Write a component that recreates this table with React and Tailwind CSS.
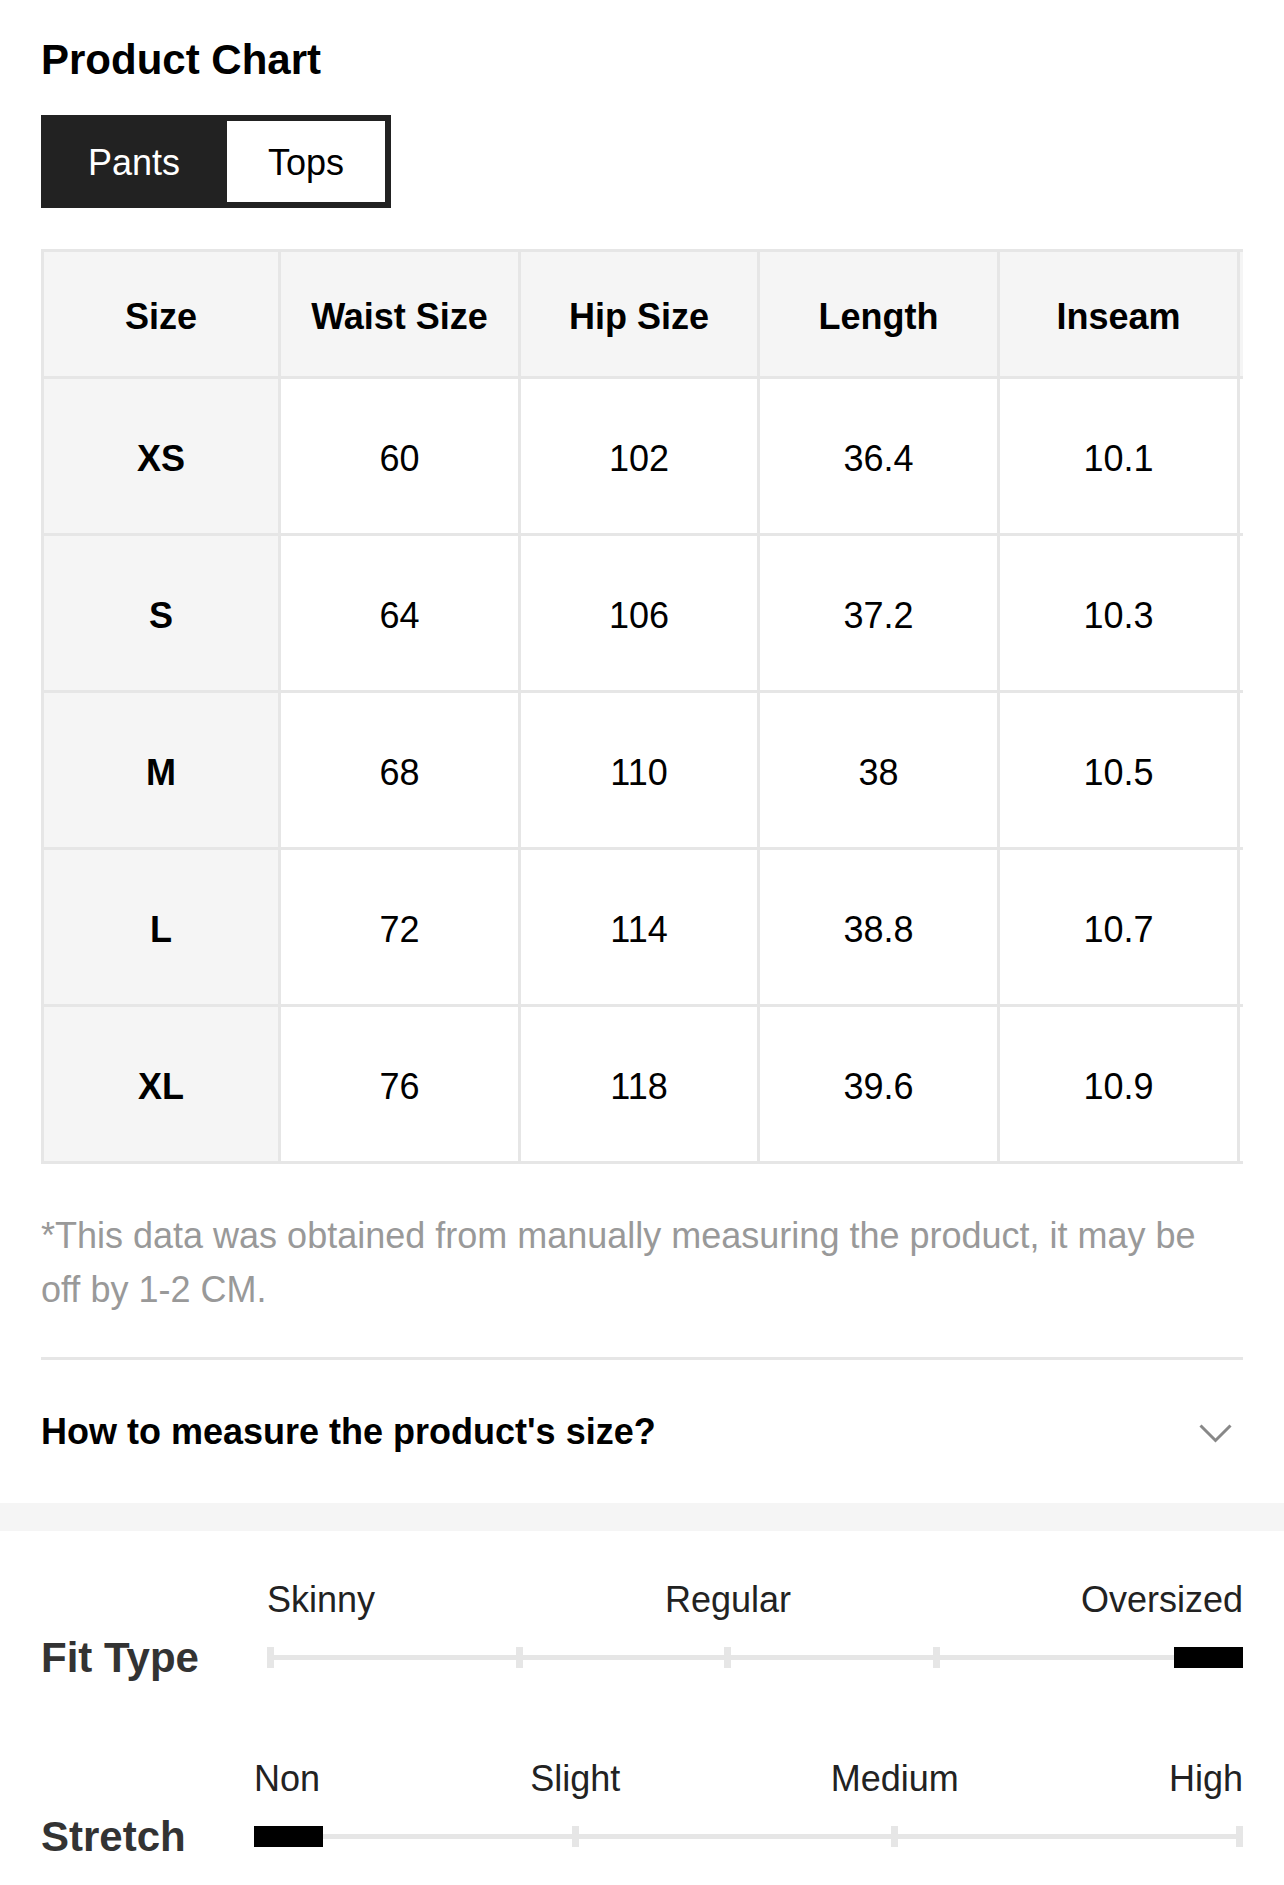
import { useState } from "react";

const columns = ["Size", "Waist Size", "Hip Size", "Length", "Inseam", ""];
const widths = ["w-[237px]", "w-[240px]", "w-[239px]", "w-[240px]", "w-[240px]", "w-[240px]"];

const rows = [
  ["XS", "60", "102", "36.4", "10.1", ""],
  ["S", "64", "106", "37.2", "10.3", ""],
  ["M", "68", "110", "38", "10.5", ""],
  ["L", "72", "114", "38.8", "10.7", ""],
  ["XL", "76", "118", "39.6", "10.9", ""],
];

// rough tick spots on each scale (px from the start of the track)
const fitTicks = [0, 249, 457, 666];
const stretchTicks = [318, 637, 982];

const Scale = ({ label, labelWidth, options, ticks, markerRight }) => (
  <div className="flex items-end">
    <div className={`${labelWidth} shrink-0 h-[21px] flex items-center`}>
      <span className="text-[42px] font-bold leading-none text-[#333] whitespace-nowrap">{label}</span>
    </div>
    <div className="flex-1 flex flex-col">
      <div className="flex justify-between h-[42px] text-[36px] leading-[42px] text-[#222]">
        {options.map((o) => (
          <span key={o}>{o}</span>
        ))}
      </div>
      <div className="relative h-[21px] mt-[26px]">
        <div className="absolute left-0 right-0 top-[8px] h-[5px] bg-[#e6e6e6]" />
        {ticks.map((t) => (
          <div key={t} className="absolute top-0 w-[7px] h-[21px] bg-[#e6e6e6]" style={{ left: t }} />
        ))}
        <div className={`absolute top-0 w-[69px] h-[21px] bg-black ${markerRight ? "right-0" : "left-0"}`} />
      </div>
    </div>
  </div>
);

export default function App() {
  const [tab, setTab] = useState("Pants");

  return (
    <div className="w-[1284px] bg-white text-black" style={{ fontFamily: '"Liberation Sans", Arial, sans-serif' }}>
      <div className="px-[41px] pt-[36px]">
        <h1 className="text-[42px] font-bold leading-[48px]">Product Chart</h1>

        {/* Tabs */}
        <div className="mt-[31px] inline-flex border-[6px] border-[#222]">
          {["Pants", "Tops"].map((t) => (
            <button
              key={t}
              onClick={() => setTab(t)}
              className={`h-[81px] pt-[2px] text-[36px] flex items-center justify-center ${
                t === "Pants" ? "w-[180px] pr-[6px]" : "w-[158px]"
              } ${tab === t ? "bg-[#222] text-white" : "bg-white text-black"}`}
            >
              {t}
            </button>
          ))}
        </div>

        {/* Size table */}
        <div className="mt-[41px] w-[1202px] overflow-hidden">
          <div className="w-max border-t-[3px] border-l-[3px] border-[#e6e6e6]">
            <div className="flex">
              {columns.map((c, i) => (
                <div
                  key={i}
                  className={`${widths[i]} shrink-0 h-[127px] pt-[5px] border-r-[3px] border-b-[3px] border-[#e6e6e6] bg-[#f5f5f5] flex items-center justify-center text-[36px] font-bold`}
                >
                  {c}
                </div>
              ))}
            </div>
            {rows.map((r) => (
              <div key={r[0]} className="flex">
                {r.map((v, i) => (
                  <div
                    key={i}
                    className={`${widths[i]} shrink-0 h-[157px] pt-[5px] border-r-[3px] border-b-[3px] border-[#e6e6e6] flex items-center justify-center text-[36px] ${
                      i === 0 ? "bg-[#f5f5f5] font-bold" : "bg-white"
                    }`}
                  >
                    {v}
                  </div>
                ))}
              </div>
            ))}
          </div>
        </div>

        <p className="mt-[45px] pr-[8px] text-[36px] leading-[54px] text-[#999]">
          *This data was obtained from manually measuring the product, it may be off by 1-2 CM.
        </p>

        <div className="mt-[40px] h-[3px] bg-[#e6e6e6]" />

        <div className="h-[143px] flex items-center justify-between">
          <span className="text-[36px] font-bold">How to measure the product's size?</span>
          <svg width="33" height="19" viewBox="0 0 33 19" className="mr-[11px] mt-[4px]">
            <polyline points="1.5,1.5 16.5,16.5 31.5,1.5" fill="none" stroke="#888" strokeWidth="3" />
          </svg>
        </div>
      </div>

      <div className="h-[28px] bg-[#f5f5f5]" />

      <div className="px-[41px] pt-[48px] pb-[37px]">
        <Scale
          label="Fit Type"
          labelWidth="w-[226px]"
          options={["Skinny", "Regular", "Oversized"]}
          ticks={fitTicks}
          markerRight
        />
        <div className="mt-[90px]">
          <Scale
            label="Stretch"
            labelWidth="w-[213px]"
            options={["Non", "Slight", "Medium", "High"]}
            ticks={stretchTicks}
          />
        </div>
      </div>
    </div>
  );
}
